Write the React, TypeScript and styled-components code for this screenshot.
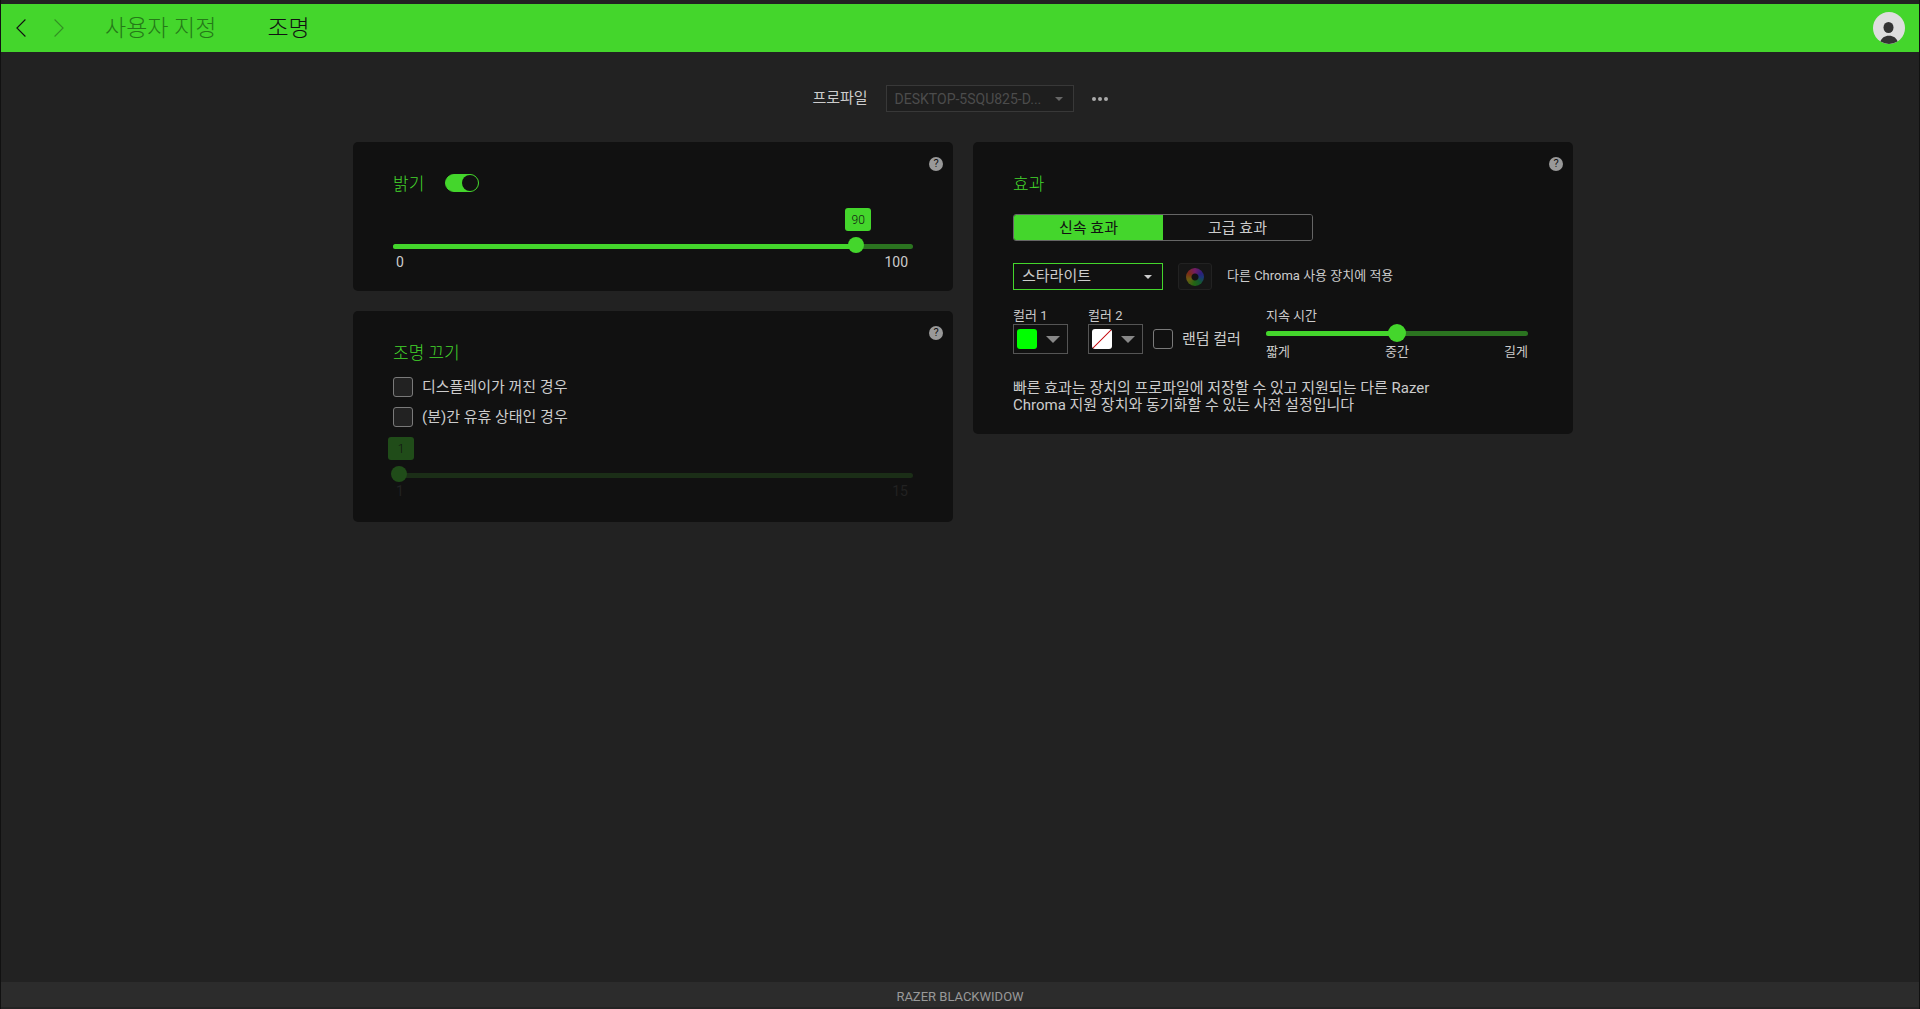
import React, { useId, useState } from 'react';
import styled, { createGlobalStyle, css } from 'styled-components';

const green = '#44d62c';
const darkGreen = '#2b7420';

const GlobalStyle = createGlobalStyle`
  *, *::before, *::after { box-sizing: border-box; }
  body {
    margin: 0;
    background: #222;
    color: #ccc;
    font-family: Roboto, "Noto Sans CJK KR", sans-serif;
    font-size: 15px;
    line-height: 18px;
  }
  button, select, input { font: inherit; color: inherit; margin: 0; }
`;

const Shell = styled.div`
  min-height: 100vh;
  display: flex;
  flex-direction: column;
  border: 0 solid #111;
  border-width: 0 1px;
`;

const Header = styled.header`
  display: flex;
  align-items: center;
  height: 52px;
  padding: 0 14px 0 11px;
  border-top: 4px solid #222;
  background: ${green};
`;

const IconButton = styled.button`
  display: grid;
  place-items: center;
  padding: 0;
  border: 0;
  background: none;
`;

const NavButton = styled(IconButton)`
  width: 18px;
  height: 24px;
  margin-right: 20px;
  color: #111;
  &:disabled { opacity: 0.35; }
`;

const Tabs = styled.nav`
  display: flex;
  flex: 1;
  gap: 51px;
  margin-left: 17px;
  padding-top: 2px;
  font-size: 23px;
  line-height: 32px;
  font-weight: 300;
`;

const Tab = styled.a<{ $current?: boolean }>`
  color: ${(p) => (p.$current ? '#111' : '#257a18')};
  text-decoration: none;
`;

const Main = styled.main`
  flex: 1;
  padding: 33px 20px;
`;

const ProfileRow = styled.div`
  display: flex;
  align-items: center;
  justify-content: center;
  gap: 18px;
  margin-bottom: 30px;
  label { padding-bottom: 2px; }
`;

const SelectBox = styled.div<{ $width: number }>`
  display: grid;
  align-items: center;
  width: ${(p) => p.$width}px;
  color: #ccc;
  > * { grid-area: 1 / 1; }
  svg { justify-self: end; margin-right: 11px; pointer-events: none; }
  &:has(:disabled) { color: #666; }
`;

const Select = styled.select`
  appearance: none;
  width: 100%;
  height: 27px;
  padding: 0 28px 2px 8px;
  border: 1px solid ${green};
  border-radius: 0;
  background: #111;
  color: #ccc;
  text-overflow: ellipsis;
  &:disabled {
    border-color: #383838;
    background: #1e1e1e;
    color: #4c4c4c;
    opacity: 1;
    padding-bottom: 0;
    font-size: 14px;
  }
`;

const Columns = styled.div`
  display: flex;
  flex-wrap: wrap;
  align-items: flex-start;
  justify-content: center;
  gap: 20px;
  padding-left: 6px;
`;

const Column = styled.div`
  display: flex;
  flex-direction: column;
  gap: 20px;
  width: 600px;
  max-width: 100%;
`;

const Card = styled.section`
  display: grid;
  padding: 30px 40px 20px;
  border-radius: 5px;
  background: #111;
  > * { grid-column: 1; }
`;

const HelpButton = styled(IconButton)`
  grid-row: 1;
  justify-self: end;
  width: 14px;
  height: 14px;
  margin: -15px -30px 0 0;
  border-radius: 50%;
  background: #999;
  color: #111;
  font-size: 11px;
  line-height: 14px;
`;

const CardHead = styled.div`
  grid-row: 1;
  display: flex;
  align-items: center;
  gap: 21px;
  height: 22px;
`;

const Title = styled.h2`
  margin: 0;
  color: ${green};
  font-size: 17px;
  line-height: 22px;
  padding-top: 2px;
  font-weight: 300;
`;

const Toggle = styled.input`
  appearance: none;
  display: flex;
  width: 34px;
  height: 18px;
  border: 1px solid ${green};
  border-radius: 9px;
  background: #111;
  &::before {
    content: '';
    width: 16px;
    height: 16px;
    border-radius: 50%;
    background: #666;
  }
  &:checked { justify-content: flex-end; background: ${green}; }
  &:checked::before { background: #111; }
`;

const SliderBox = styled.div`
  position: relative;
  display: grid;
  align-items: center;
  height: 5px;
  > * { grid-area: 1 / 1; }
`;

const Rail = styled.div<{ $off?: boolean }>`
  height: 5px;
  border-radius: 3px;
  overflow: hidden;
  background: ${(p) => (p.$off ? '#1b2e17' : darkGreen)};
`;

const Fill = styled.div`
  height: 100%;
  background: ${green};
`;

const Range = styled.input<{ $thumb: number }>`
  appearance: none;
  position: relative;
  width: calc(100% + 4px);
  height: 5px;
  margin: 0 -2px;
  background: transparent;
  &::-webkit-slider-runnable-track { height: 5px; }
  &::-webkit-slider-thumb {
    appearance: none;
    width: ${(p) => p.$thumb}px;
    height: ${(p) => p.$thumb}px;
    margin-top: -7px;
    border-radius: 50%;
    background: ${green};
  }
  &:disabled::-webkit-slider-thumb { background: #204c19; }
`;

const Bubble = styled.output<{ $off?: boolean }>`
  position: absolute;
  bottom: 18px;
  width: 26px;
  height: 23px;
  border-radius: 3px;
  background: ${(p) => (p.$off ? '#204c19' : green)};
  color: #111;
  font-size: 12px;
  font-weight: 300;
  line-height: 24px;
  text-align: center;
`;

const Scale = styled.div<{ $off?: boolean; $small?: boolean }>`
  display: flex;
  justify-content: space-between;
  ${(p) =>
    p.$small
      ? css`
          margin-top: 7px;
          font-size: 13px;
        `
      : css`
          margin-top: 4px;
          padding: 0 5px 0 3px;
          font-size: 14px;
        `}
  color: ${(p) => (p.$off ? '#222' : '#ccc')};
`;

const SliderArea = styled.div<{ $top: number; $bottom: number }>`
  margin: ${(p) => p.$top}px 0 ${(p) => p.$bottom}px;
`;

const CheckLabel = styled.label`
  display: flex;
  align-items: center;
  gap: 9px;
  height: 20px;
`;

const CheckInput = styled.input`
  appearance: none;
  flex: none;
  width: 20px;
  height: 20px;
  border: 1px solid #7a7a7a;
  border-radius: 3px;
  background: #222;
  &:checked { background: ${green}; }
`;

const CheckList = styled.div`
  display: grid;
  gap: 10px;
  margin-top: 14px;
`;

const Segments = styled.div`
  display: flex;
  width: 300px;
  height: 27px;
  margin-top: 20px;
  border: 1px solid #666;
  border-radius: 3px;
  overflow: hidden;
`;

const Segment = styled.button<{ $active?: boolean }>`
  flex: 1;
  padding: 0;
  border: 0;
  background: ${(p) => (p.$active ? green : '#111')};
  color: ${(p) => (p.$active ? '#111' : '#ccc')};
`;

const EffectRow = styled.div`
  display: flex;
  align-items: center;
  gap: 15px;
  margin-top: 22px;
  label { padding-bottom: 2px; }
`;

const ChromaButton = styled(IconButton)`
  width: 34px;
  height: 27px;
  border: 1px solid #222;
  border-radius: 3px;
  background: #161616;
`;

const Wheel = styled.span`
  width: 18px;
  height: 18px;
  border-radius: 50%;
  opacity: 0.6;
  background:
    radial-gradient(circle, #111 0 3px, transparent 4px),
    conic-gradient(#b0209a, #3a28c0 60deg, #1d4fb0 95deg, #128a3c 140deg, #2d9c10 190deg, #a58a10 250deg, #c03a18 300deg, #b0209a);
`;

const Small = styled.span`
  font-size: 13px;
  line-height: 16px;
`;

const OptionsRow = styled.div`
  display: flex;
  margin-top: 18px;
`;

const Field = styled.div`
  display: grid;
  align-content: start;
  margin-right: 20px;
`;

const ColorButton = styled.button`
  display: flex;
  align-items: center;
  justify-content: space-between;
  width: 55px;
  height: 30px;
  padding: 0 7px 0 3px;
  border: 1px solid #555;
  background: #111;
  color: #888;
`;

const Swatch = styled.span<{ $empty?: boolean }>`
  width: 20px;
  height: 20px;
  border-radius: 3px;
  background: ${(p) =>
    p.$empty
      ? 'linear-gradient(to bottom right, #fff 47%, #c8191e 49%, #c8191e 51%, #fff 53%)'
      : '#0f0'};
`;

const RandomField = styled.div`
  margin: 21px 0 0 -10px;
  input { background: #111; }
`;

const Duration = styled.div`
  width: 262px;
  margin-left: 25px;
  label { display: block; margin-bottom: 7px; }
`;

const Description = styled.p`
  max-width: 430px;
  margin: 19px 0 0;
  line-height: 17px;
`;

const Footer = styled.footer`
  height: 27px;
  border-bottom: 2px solid #242424;
  background: #2c2c2c;
  color: #999;
  font-size: 13px;
  line-height: 29px;
  text-align: center;
`;

const Caret = ({ w = 8, h = 4 }: { w?: number; h?: number }) => (
  <svg width={w} height={h} viewBox="0 0 8 4" preserveAspectRatio="none" fill="currentColor" aria-hidden="true">
    <path d="M0 0h8L4 4z" />
  </svg>
);

const Chevron = ({ back }: { back?: boolean }) => (
  <svg width="10" height="18" viewBox="0 0 10 18" fill="none" stroke="currentColor" strokeWidth="1.1" aria-hidden="true">
    <path d={back ? 'M9.400 .5L.9 9l8.500 8.500' : 'M.6 .5L9.100 9 .6 17.500'} />
  </svg>
);

const Avatar = () => (
  <svg width="32" height="32" viewBox="0 0 32 32" aria-hidden="true">
    <circle cx="16" cy="16" r="16" fill="#dedede" />
    <ellipse cx="15.5" cy="15.5" rx="5" ry="5.5" fill="#333" />
    <path d="M7.500 29.500c1-3.600 4-5.800 8.500-5.800s7.500 2.200 8.500 5.800A16 16 0 0 1 16 32a16 16 0 0 1-8.500-2.500z" fill="#333" />
  </svg>
);

type SliderProps = {
  label: string;
  min: number;
  max: number;
  initial: number;
  disabled?: boolean;
};

function ValueSlider({ label, min, max, initial, disabled }: SliderProps) {
  const [value, setValue] = useState(initial);
  const part = (value - min) / (max - min);
  return (
    <>
      <SliderBox>
        <Rail $off={disabled}>{!disabled && <Fill style={{ width: `${part * 100}%` }} />}</Rail>
        <Range
          $thumb={16}
          type="range"
          aria-label={label}
          min={min}
          max={max}
          value={value}
          disabled={disabled}
          onChange={(e) => setValue(Number(e.target.value))}
        />
        <Bubble $off={disabled} style={{ left: `calc(${part} * (100% - 12px) - 5px)` }}>
          {value}
        </Bubble>
      </SliderBox>
      <Scale $off={disabled}>
        <span>{min}</span>
        <span>{max}</span>
      </Scale>
    </>
  );
}

function Help() {
  return (
    <HelpButton type="button" aria-label="도움말">
      ?
    </HelpButton>
  );
}

function ColorField({ label, empty }: { label: string; empty?: boolean }) {
  const id = useId();
  return (
    <Field>
      <Small as="label" htmlFor={id}>
        {label}
      </Small>
      <ColorButton id={id} type="button">
        <Swatch $empty={empty} />
        <Caret w={14} h={7} />
      </ColorButton>
    </Field>
  );
}

export default function App() {
  const [lit, setLit] = useState(true);
  const [quick, setQuick] = useState(true);
  const [duration, setDuration] = useState(1);

  return (
    <>
      <GlobalStyle />
      <Shell>
        <Header>
          <NavButton type="button" aria-label="뒤로">
            <Chevron back />
          </NavButton>
          <NavButton type="button" aria-label="앞으로" disabled>
            <Chevron />
          </NavButton>
          <Tabs>
            <Tab href="#customize">사용자 지정</Tab>
            <Tab href="#lighting" $current>
              조명
            </Tab>
          </Tabs>
          <IconButton type="button" aria-label="계정">
            <Avatar />
          </IconButton>
        </Header>

        <Main>
          <ProfileRow>
            <label htmlFor="profile">프로파일</label>
            <SelectBox $width={188}>
              <Select id="profile" disabled>
                <option>DESKTOP-5SQU825-D...</option>
              </Select>
              <Caret />
            </SelectBox>
            <IconButton type="button" aria-label="더 보기">
              <svg width="16" height="4" viewBox="0 0 16 4" fill="#aaa" aria-hidden="true">
                <circle cx="2" cy="2" r="2" />
                <circle cx="8" cy="2" r="2" />
                <circle cx="14" cy="2" r="2" />
              </svg>
            </IconButton>
          </ProfileRow>

          <Columns>
            <Column>
              <Card>
                <CardHead>
                  <Title as="label" htmlFor="brightness">
                    밝기
                  </Title>
                  <Toggle
                    id="brightness"
                    type="checkbox"
                    role="switch"
                    checked={lit}
                    onChange={(e) => setLit(e.target.checked)}
                  />
                </CardHead>
                <Help />
                <SliderArea $top={50} $bottom={0}>
                  <ValueSlider label="밝기" min={0} max={100} initial={90} />
                </SliderArea>
              </Card>

              <Card>
                <CardHead>
                  <Title>조명 끄기</Title>
                </CardHead>
                <Help />
                <CheckList>
                  <CheckLabel>
                    <CheckInput type="checkbox" />
                    디스플레이가 꺼진 경우
                  </CheckLabel>
                  <CheckLabel>
                    <CheckInput type="checkbox" />
                    (분)간 유휴 상태인 경우
                  </CheckLabel>
                </CheckList>
                <SliderArea $top={46} $bottom={2}>
                  <ValueSlider label="유휴 시간(분)" min={1} max={15} initial={1} disabled />
                </SliderArea>
              </Card>
            </Column>

            <Column>
              <Card>
                <CardHead>
                  <Title>효과</Title>
                </CardHead>
                <Help />
                <Segments>
                  <Segment type="button" $active={quick} aria-pressed={quick} onClick={() => setQuick(true)}>
                    신속 효과
                  </Segment>
                  <Segment type="button" $active={!quick} aria-pressed={!quick} onClick={() => setQuick(false)}>
                    고급 효과
                  </Segment>
                </Segments>
                <EffectRow>
                  <SelectBox $width={150}>
                    <Select aria-label="효과">
                      <option>스타라이트</option>
                    </Select>
                    <Caret />
                  </SelectBox>
                  <ChromaButton id="chroma" type="button">
                    <Wheel />
                  </ChromaButton>
                  <Small as="label" htmlFor="chroma">
                    다른 Chroma 사용 장치에 적용
                  </Small>
                </EffectRow>
                <OptionsRow>
                  <ColorField label="컬러 1" />
                  <ColorField label="컬러 2" empty />
                  <RandomField>
                    <CheckLabel>
                      <CheckInput type="checkbox" />
                      랜덤 컬러
                    </CheckLabel>
                  </RandomField>
                  <Duration>
                    <Small as="label" htmlFor="duration">
                      지속 시간
                    </Small>
                    <SliderBox>
                      <Rail>
                        <Fill style={{ width: `${duration * 50}%` }} />
                      </Rail>
                      <Range
                        $thumb={18}
                        id="duration"
                        type="range"
                        min={0}
                        max={2}
                        value={duration}
                        onChange={(e) => setDuration(Number(e.target.value))}
                      />
                    </SliderBox>
                    <Scale $small>
                      <span>짧게</span>
                      <span>중간</span>
                      <span>길게</span>
                    </Scale>
                  </Duration>
                </OptionsRow>
                <Description>
                  빠른 효과는 장치의 프로파일에 저장할 수 있고 지원되는 다른 Razer Chroma 지원 장치와 동기화할 수 있는
                  사전 설정입니다
                </Description>
              </Card>
            </Column>
          </Columns>
        </Main>

        <Footer>RAZER BLACKWIDOW</Footer>
      </Shell>
    </>
  );
}
